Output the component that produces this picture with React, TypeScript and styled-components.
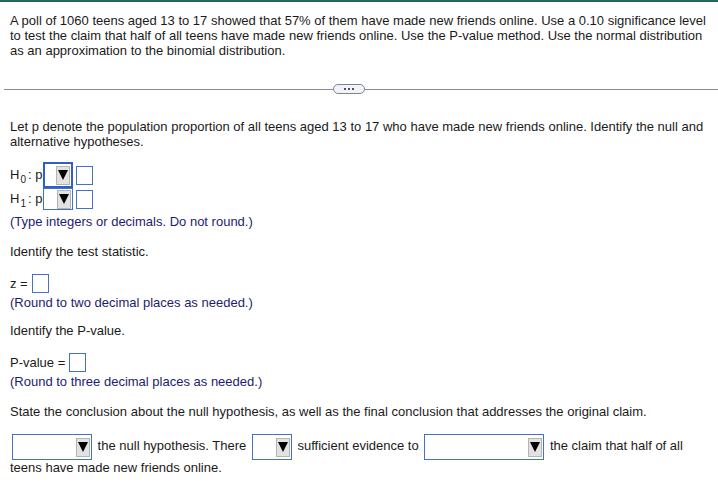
import React from "react";
import styled, { createGlobalStyle } from "styled-components";

const Global = createGlobalStyle`
  html, body {
    margin: 0;
    padding: 0;
    background: #fff;
  }
  body {
    font-family: "Liberation Sans", Arial, sans-serif;
    font-size: 13px;
    line-height: 15px;
    color: #1a1a1a;
  }
`;

const Page = styled.div`
  width: 718px;
  height: 485px;
  border-top: 2px solid #24665c;
  box-sizing: border-box;
  overflow: hidden;
`;

const Section = styled.div`
  padding: 0 10px;
`;

const Para = styled.p<{ $top: number }>`
  margin: ${(p) => p.$top}px 0 0;
`;

const Hint = styled(Para)`
  color: #1c1c70;
`;

const Divider = styled.div`
  display: flex;
  align-items: center;
  margin: 26px 0 0 4px;
  height: 10px;
`;

const Rule = styled.div<{ $w?: number }>`
  height: 1px;
  background: #878c99;
  ${(p) => (p.$w ? `width: ${p.$w}px;` : "flex: 1;")}
`;

const Pill = styled.div`
  width: 30px;
  height: 8px;
  border: 1px solid #7d8594;
  border-radius: 5px;
  background: #f1f3f6;
  display: flex;
  align-items: center;
  justify-content: center;
  gap: 2px;
`;

const Dot = styled.span`
  width: 2px;
  height: 2px;
  background: #4c5260;
`;

const HRow = styled.div<{ $top: number; $h: number }>`
  display: flex;
  align-items: center;
  height: ${(p) => p.$h}px;
  margin-top: ${(p) => p.$top}px;
`;

const HLabel = styled.span`
  display: inline-flex;
  align-items: baseline;
  white-space: nowrap;
  margin-right: 1px;
`;

const Sub = styled.span`
  font-size: 10px;
  position: relative;
  top: 4px;
  margin: 0 2px 0 1px;
`;

const Select = styled.span<{ $w: number; $focus?: boolean; $h?: number }>`
  display: inline-flex;
  align-items: center;
  justify-content: flex-end;
  box-sizing: border-box;
  width: ${(p) => p.$w}px;
  height: ${(p) => p.$h ?? 22}px;
  border: ${(p) => (p.$focus ? "2px solid #2f5fc4" : "1px solid #4470cc")};
  background: #fff;
  padding-right: 1px;
  vertical-align: middle;
`;

const Arrow = styled.span`
  width: 14px;
  height: 19px;
  box-sizing: border-box;
  background: #e2e2e2;
  border: 1px solid #b4b4b4;
  display: flex;
  align-items: center;
  justify-content: center;
  &::after {
    content: "";
    border-left: 5px solid transparent;
    border-right: 5px solid transparent;
    border-top: 10px solid #000;
  }
`;

const Box = styled.span<{ $h?: number }>`
  display: inline-block;
  box-sizing: border-box;
  width: 17px;
  height: ${(p) => p.$h ?? 19}px;
  border: 1px solid #4470cc;
  background: #fff;
  vertical-align: middle;
`;

const Eq = styled.div<{ $top: number }>`
  display: flex;
  align-items: center;
  gap: 4px;
  height: 19px;
  margin-top: ${(p) => p.$top}px;
`;

const Flow = styled.p`
  margin: 15px 0 0;
  line-height: 15px;
  & > span {
    margin: 0 2px;
  }
  & > span:first-child {
    margin-left: 2px;
  }
`;

function Drop(props: { w: number; focus?: boolean; h?: number }) {
  return (
    <Select $w={props.w} $focus={props.focus} $h={props.h}>
      <Arrow />
    </Select>
  );
}

export default function App() {
  return (
    <Page>
      <Global />
      <Section>
        <Para $top={11}>
          A poll of 1060 teens aged 13 to 17 showed that 57% of them have made new friends online. Use a 0.10
          significance level to test the claim that half of all teens have made new friends online. Use the P-value
          method. Use the normal distribution as an approximation to the binomial distribution.
        </Para>
      </Section>
      <Divider>
        <Rule $w={329} />
        <Pill>
          <Dot />
          <Dot />
          <Dot />
        </Pill>
        <Rule />
      </Divider>
      <Section>
        <Para $top={25}>
          Let p denote the population proportion of all teens aged 13 to 17 who have made new friends online. Identify
          the null and alternative hypotheses.
        </Para>
        <HRow $top={13} $h={26}>
          <HLabel>
            H<Sub>0</Sub>: p
          </HLabel>
          <Drop w={30} h={26} focus />
          <Box style={{ marginLeft: 3 }} />
        </HRow>
        <HRow $top={0} $h={22}>
          <HLabel>
            H<Sub>1</Sub>: p
          </HLabel>
          <Drop w={30} h={22} />
          <Box style={{ marginLeft: 3 }} />
        </HRow>
        <Hint $top={4}>(Type integers or decimals. Do not round.)</Hint>
        <Para $top={15}>Identify the test statistic.</Para>
        <Eq $top={15}>
          <span>z =</span>
          <Box />
        </Eq>
        <Hint $top={2}>(Round to two decimal places as needed.)</Hint>
        <Para $top={13}>Identify the P-value.</Para>
        <Eq $top={15}>
          <span>P-value =</span>
          <Box />
        </Eq>
        <Hint $top={2}>(Round to three decimal places as needed.)</Hint>
        <Para $top={15}>
          State the conclusion about the null hypothesis, as well as the final conclusion that addresses the original
          claim.
        </Para>
        <Flow>
          <Drop w={80} h={26} /> the null hypothesis. There <Drop w={40} h={26} /> sufficient evidence to{" "}
          <Drop w={120} h={26} /> the claim that half of all teens have made new friends online.
        </Flow>
      </Section>
    </Page>
  );
}
